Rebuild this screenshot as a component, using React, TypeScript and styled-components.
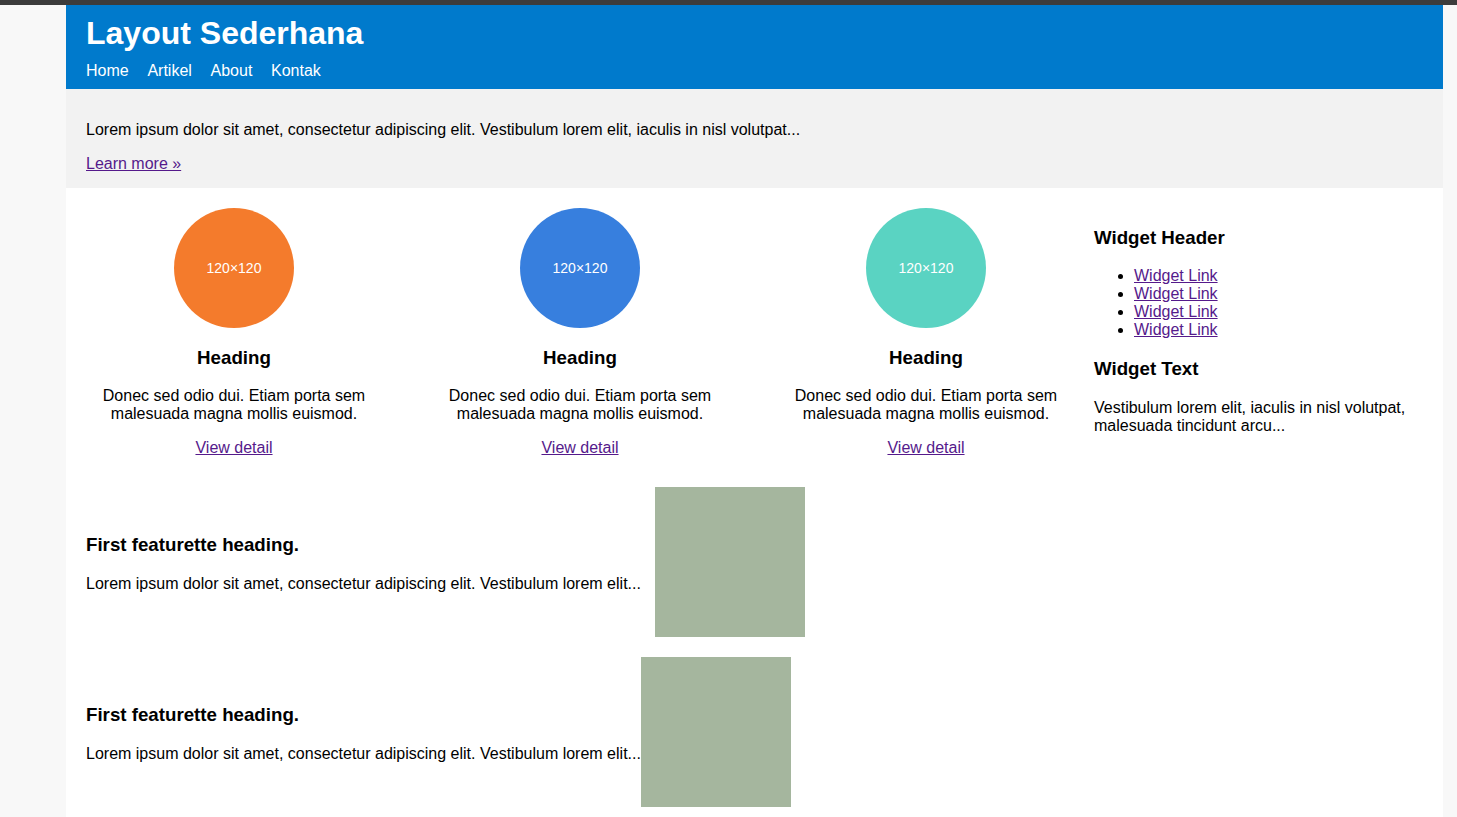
import React from "react";
import styled, { createGlobalStyle } from "styled-components";

const Global = createGlobalStyle`
  html, body { margin: 0; padding: 0; }
  body {
    background: #f8f8f8;
    font-family: "Liberation Sans", Arial, sans-serif;
    font-size: 16px;
    color: #000;
    border-top: 5px solid #3c3c3c;
  }
  a { color: #551a8b; }
`;

const Container = styled.div`
  margin-left: 66px;
  width: 1377px;
  background: #fff;
  min-height: 812px;
`;

const Header = styled.header`
  background: #007acc;
  color: #fff;
  padding: 10px 20px 9px;
`;

const Title = styled.h1`
  margin: 0;
  font-size: 32px;
  line-height: 36px;
  font-weight: bold;
`;

const Nav = styled.nav`
  display: flex;
  gap: 18.7px;
  margin-top: 11px;
  line-height: 18px;
  a { color: #fff; text-decoration: none; }
`;

const Jumbo = styled.section`
  background: #f2f2f2;
  padding: 32px 20px 15px;
  display: flex;
  flex-direction: column;
  gap: 16px;
  p { margin: 0; line-height: 18px; }
`;

const Main = styled.main`
  display: flex;
  padding: 20px 20px 0;
`;

const Columns = styled.div`
  display: grid;
  grid-template-columns: repeat(3, 296px);
  column-gap: 50px;
`;

const Column = styled.div`
  display: flex;
  flex-direction: column;
  align-items: center;
  text-align: center;
`;

const Circle = styled.div<{ $bg: string }>`
  width: 120px;
  height: 120px;
  border-radius: 50%;
  background: ${(p) => p.$bg};
  color: #fff;
  font-size: 14px;
  display: flex;
  align-items: center;
  justify-content: center;
`;

const ColHeading = styled.h2`
  margin: 18px 0 0;
  font-size: 18.72px;
  line-height: 24px;
`;

const ColText = styled.p`
  margin: 17px 0 0;
  line-height: 18px;
`;

const ColLink = styled.a`
  margin-top: 16px;
  line-height: 18px;
`;

const Sidebar = styled.aside`
  margin-left: 20px;
  padding-top: 18px;
  width: 329px;
`;

const WidgetHeading = styled.h3<{ $top?: number }>`
  margin: ${(p) => p.$top ?? 0}px 0 0;
  font-size: 18.72px;
  line-height: 24px;
`;

const WidgetList = styled.ul`
  margin: 17px 0 0;
  padding-left: 40px;
  line-height: 18px;
`;

const WidgetText = styled.p`
  margin: 18px 0 0;
  line-height: 18px;
`;

const Featurettes = styled.div`
  display: flex;
  flex-direction: column;
  gap: 20px;
  padding: 30px 20px 20px;
`;

const Featurette = styled.div<{ $gap: number }>`
  display: flex;
  align-items: center;
  gap: ${(p) => p.$gap}px;
`;

const FeatText = styled.div`
  display: flex;
  flex-direction: column;
  gap: 18px;
  h2 { margin: 0; padding-top: 1px; font-size: 18.72px; line-height: 24px; }
  p { margin: 0; line-height: 18px; }
`;

const FeatImage = styled.div`
  width: 150px;
  height: 150px;
  flex: none;
  background: #a5b69e;
`;

const cols = [
  { bg: "#f47b2c" },
  { bg: "#377fde" },
  { bg: "#5ad3c2" },
];

export default function App() {
  return (
    <>
      <Global />
      <Container>
        <Header>
          <Title>Layout Sederhana</Title>
          <Nav>
            <a href="#">Home</a>
            <a href="#">Artikel</a>
            <a href="#">About</a>
            <a href="#">Kontak</a>
          </Nav>
        </Header>
        <Jumbo>
          <p>Lorem ipsum dolor sit amet, consectetur adipiscing elit. Vestibulum lorem elit, iaculis in nisl volutpat...</p>
          <p><a href="#">Learn more »</a></p>
        </Jumbo>
        <Main>
          <Columns>
            {cols.map((c, i) => (
              <Column key={i}>
                <Circle $bg={c.bg}>120×120</Circle>
                <ColHeading>Heading</ColHeading>
                <ColText>Donec sed odio dui. Etiam porta sem malesuada magna mollis euismod.</ColText>
                <ColLink href="#">View detail</ColLink>
              </Column>
            ))}
          </Columns>
          <Sidebar>
            <WidgetHeading>Widget Header</WidgetHeading>
            <WidgetList>
              <li><a href="#">Widget Link</a></li>
              <li><a href="#">Widget Link</a></li>
              <li><a href="#">Widget Link</a></li>
              <li><a href="#">Widget Link</a></li>
            </WidgetList>
            <WidgetHeading $top={18}>Widget Text</WidgetHeading>
            <WidgetText>Vestibulum lorem elit, iaculis in nisl volutpat, malesuada tincidunt arcu...</WidgetText>
          </Sidebar>
        </Main>
        <Featurettes>
          <Featurette $gap={14}>
            <FeatText>
              <h2>First featurette heading.</h2>
              <p>Lorem ipsum dolor sit amet, consectetur adipiscing elit. Vestibulum lorem elit...</p>
            </FeatText>
            <FeatImage />
          </Featurette>
          <Featurette $gap={0}>
            <FeatText>
              <h2>First featurette heading.</h2>
              <p>Lorem ipsum dolor sit amet, consectetur adipiscing elit. Vestibulum lorem elit...</p>
            </FeatText>
            <FeatImage />
          </Featurette>
        </Featurettes>
      </Container>
    </>
  );
}
